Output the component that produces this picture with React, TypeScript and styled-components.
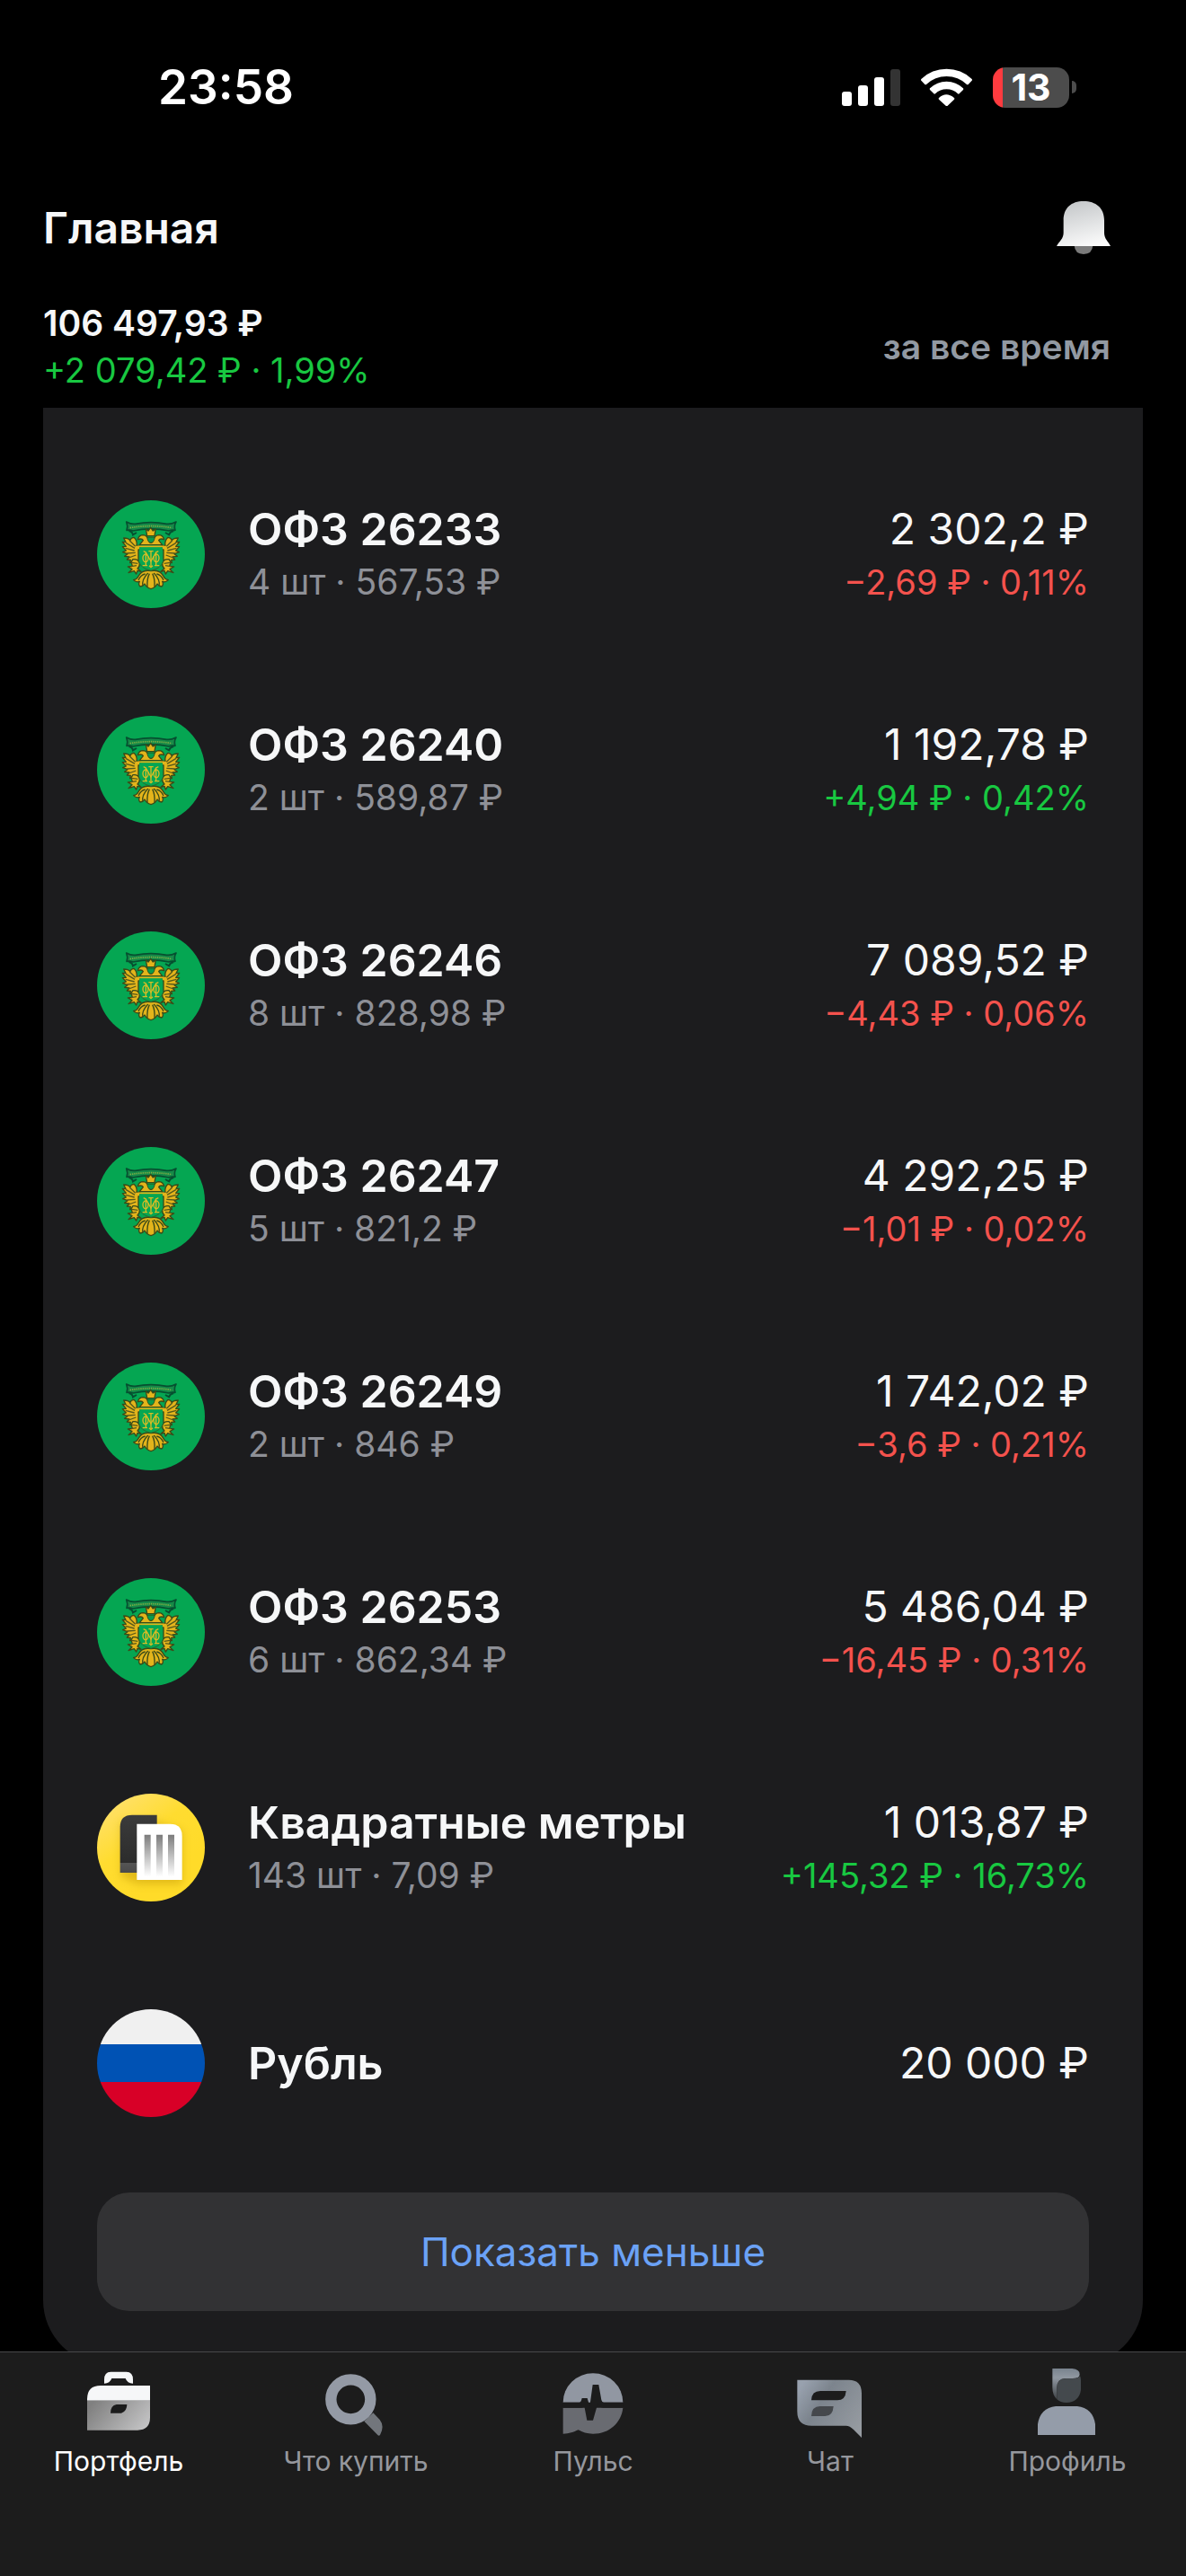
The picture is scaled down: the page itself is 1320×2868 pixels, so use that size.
import React, {useState} from 'react';
import styled, {createGlobalStyle} from "styled-components";

const GlobalStyle = createGlobalStyle`
  * {
    box-sizing: border-box;
  }
  body {
    margin: 0;
    background: #000;
    color: #f6f7f8;
    font-family: Inter, "Liberation Sans", sans-serif;
  }
`;

const Page = styled.div`
  min-height: 100vh;
  padding-bottom: 235px;
`;

const StatusBar = styled.div`
  display: flex;
  align-items: center;
  justify-content: space-between;
  height: 194px;
  padding: 0 122px 0 176px;
`;

const Clock = styled.time`
  font-size: 53px;
  font-weight: 600;
  color: #fff;
`;

const StatusIcons = styled.div`
  display: flex;
  align-items: center;
  gap: 23px;
`;

const Battery = styled.div`
  display: flex;
  align-items: center;
  gap: 3px;
`;

const BatteryBody = styled.span`
  width: 85px;
  height: 45px;
  border-radius: 14px;
  background: linear-gradient(to right, #ff3b3f 11px, #4c4c4c 11px);
  color: #fff;
  font-size: 41px;
  font-weight: 700;
  line-height: 45px;
  text-align: center;
`;

const BatteryCap = styled.span`
  width: 5px;
  height: 14px;
  border-radius: 0 7px 7px 0;
  background: #4c4c4c;
`;

const TitleBar = styled.header`
  display: flex;
  align-items: center;
  justify-content: space-between;
  height: 118px;
  padding: 0 84px 0 48px;
`;

const Title = styled.h1`
  margin: 0;
  font-size: 48px;
  font-weight: 600;
`;

const PlainButton = styled.button`
  display: flex;
  padding: 0;
  border: 0;
  background: none;
  cursor: pointer;
`;

const Summary = styled.section`
  display: flex;
  align-items: center;
  justify-content: space-between;
  padding: 22px 84px 16px 48px;
  font-size: 39px;
  line-height: 52px;
`;

const Total = styled.div`
  font-weight: 600;
`;

const Delta = styled.div<{$up: boolean}>`
  color: ${p => p.$up ? "#18c841" : "#f4524d"};
  font-size: 38px;
`;

const PeriodButton = styled(PlainButton)`
  color: #9299a2;
  font: inherit;
  font-weight: 600;
`;

const Card = styled.main`
  margin: 0 48px;
  padding: 43px 60px 60px;
  border-radius: 0 0 72px 72px;
  background: #1c1c1e;
`;

const List = styled.ul`
  margin: 0 0 24px;
  padding: 0;
  list-style: none;
`;

const Row = styled.li`
  display: flex;
  align-items: center;
  gap: 48px;
  height: 240px;
`;

const Info = styled.div`
  flex: 1;
`;

const Values = styled.div`
  text-align: right;
`;

const Name = styled.div`
  font-size: 50px;
  font-weight: 600;
  line-height: 62px;
`;

const Amount = styled.div`
  font-size: 48px;
  line-height: 62px;
`;

const Details = styled.div`
  color: #8e9097;
  font-size: 39px;
  line-height: 56px;
`;

const RowDelta = styled(Delta)`
  line-height: 56px;
`;

const ToggleButton = styled.button`
  display: block;
  width: 100%;
  height: 132px;
  border: 0;
  border-radius: 36px;
  background: #323234;
  color: #6ba2f6;
  font-family: inherit;
  font-size: 44px;
  cursor: pointer;
`;

const TabBar = styled.nav`
  position: fixed;
  left: 0;
  right: 0;
  bottom: 0;
  display: grid;
  grid-template-columns: repeat(5, 1fr);
  height: 250px;
  border-top: 1px solid #48484a;
  background: #1c1c1c;
`;

const Tab = styled.a<{$active?: boolean}>`
  display: flex;
  flex-direction: column;
  align-items: center;
  gap: 6px;
  padding-top: 17px;
  color: ${p => p.$active ? "#fff" : "#95979d"};
  font-size: 30px;
  line-height: 36px;
  text-decoration: none;
`;

const SignalIcon = () => (
    <svg width="65" height="41" viewBox="0 0 65 41" fill="#fff">
        <rect x="0" y="25" width="11" height="16" rx="3"/>
        <rect x="18" y="18" width="11" height="23" rx="3"/>
        <rect x="36" y="9" width="11" height="32" rx="3"/>
        <rect x="54" y="0" width="11" height="41" rx="3" fill="#333"/>
    </svg>
);

const WifiIcon = () => (
    <svg width="57" height="42" viewBox="375 105 171 126" fill="#fff">
        <path d="M376 141a122 122 0 0 1 169 0q2 3 0 5l-12 13q-3 2-5 0a98 98 0 0 0-135 0q-3 2-5 0l-12-13q-2-2 0-5z"/>
        <path d="M405 172a80 80 0 0 1 111 0q2 2 0 5l-13 13q-3 2-5 0a54 54 0 0 0-75 0q-3 2-5 0l-13-13q-2-3 0-5z"/>
        <path d="M435 204q24-22 51 0q2 2 0 5l-22 21q-3 3-6 0l-23-21q-2-3 0-5z"/>
    </svg>
);

const BellIcon = () => (
    <svg width="60" height="59" viewBox="828 552 180 177">
        <defs>
            <linearGradient id="bell" x1="0.3" y1="0" x2="0.6" y2="1">
                <stop offset="0" stopColor="#c4c7c9"/>
                <stop offset="1" stopColor="#fafafa"/>
            </linearGradient>
        </defs>
        <path fill="#7b7b7b" d="M887 700h62q-2 29-31 29t-31-29z"/>
        <path fill="url(#bell)"
              d="M851 616c0-42 26-64 67-64s69 22 69 64v42c0 20 13 28 21 44H828c9-16 23-24 23-44z"/>
    </svg>
);

const CrestIcon = () => (
    <svg width="120" height="120" viewBox="54 51 360 360">
        <circle cx="234" cy="231" r="180" fill="#05a652"/>
        {/* ribbon */}
        <path d="M152 123q16 9 30 7 52-10 104 0 15 2 32-7-8 13-3 28-11-2-21 2-60-13-120 0-10-4-21-2 5-14-1-28z"
              fill="#168a48" stroke="#064f30" strokeWidth="5" strokeLinejoin="round"/>
        <path d="M164 143q70-12 140 0" fill="none" stroke="#7fae45" strokeWidth="5" strokeDasharray="4 3"/>
        <path d="M160 153q12 2 14 13l12-7M310 153q-12 2-16 13l-12-7" fill="none" stroke="#064f30" strokeWidth="6"/>
        <g stroke="#3a4a18" strokeWidth="4" strokeLinejoin="round" fill="#e3b41b">
            {/* wings */}
            <path d="M143 177q16 0 21 8 4-10 13-10 12 10 9 27h12v14h-6v34q-16 2-28 10l2-10-12-1 8-9-16-2 10-8-16-6 11-5-12-13 12-1-12-15 11 1z"/>
            <path d="M325 177q-16 0-21 8-4-10-13-10-12 10-9 27h-12v14h6v34q16 2 28 10l-2-10 12-1-8-9 16-2-10-8 16-6-11-5 12-13-12-1 12-15-11 1z"/>
            {/* heads and crown */}
            <path d="M190 182q4-15 18-15 13 1 16 14 4 12 10 12t10-12q3-13 16-14 14 0 18 15-14-5-18 3l12 15h-76l12-15q-4-8-18-3z"/>
            <path d="M217 146l8 7 8-11 8 11 9-7-4 24h-25z"/>
            {/* legs */}
            <path d="M174 248q18-2 22 14 1 10-7 17l12 10-12-3-4 11-7-10-19 6 12-12-14-8 15-2-4-14z"/>
            <path d="M294 248q-18-2-22 14-1 10 7 17l-12 10 12-3 4 11 7-10 19 6-12-12 14-8-15-2 4-14z"/>
            {/* tail */}
            <path d="M234 287q-30-6-42 18-4 9-16 12 9 10 20 5-5 12 2 17 10-1 15-9 6 13 21 17 15-4 21-17 5 8 15 9 7-5 2-17 11 5 20-5-12-3-16-12-12-24-42-18z"/>
        </g>
        <path d="M207 337q-5-20 17-43M222 340q-2-26 7-44M246 340q2-26-7-44M261 337q5-20-17-43M192 318q8-18 23-21M276 318q-8-18-23-21"
              fill="none" stroke="#3a4a18" strokeWidth="4"/>
        <path d="M150 193l30 18M149 211l30 8M154 228l28-2M160 243l24-9M163 186l19 19M318 193l-30 18M319 211l-30 8M314 228l-28-2M308 243l-24-9M305 186l-19 19M170 259l20 3M168 272l18-3M298 259l-20 3M300 272l-18-3"
              fill="none" stroke="#57591b" strokeWidth="4"/>
        <path d="M222 175h24q0 16-12 18-12-2-12-18z" fill="#079b4d" stroke="#3a4a18" strokeWidth="2"/>
        {/* shield with the monogram */}
        <path d="M195 208h78v50q-5 20-39 27-34-7-39-27z" fill="#05a652"/>
        <path d="M188 205h92" fill="none" stroke="#e3b41b" strokeWidth="5"/>
        <path d="M194 256q6 22 40 30 34-8 40-30" fill="none" stroke="#2a6b2b" strokeWidth="3"/>
        <g fill="none" stroke="#d8bd25" strokeWidth="4">
            <path d="M209 221l8 4v42M259 221l-8 4v42M217 225l17 30 17-30M206 269h16M246 269h16"/>
            <path d="M234 221v50M226 221h16M228 269l6 6 6-6"/>
            <ellipse cx="216" cy="244" rx="9" ry="13"/>
            <ellipse cx="252" cy="244" rx="9" ry="13"/>
        </g>
    </svg>
);

const MetersIcon = () => (
    <svg width="120" height="120" viewBox="54 51 360 360">
        <defs>
            <linearGradient id="coin" x1="0.1" y1="0.1" x2="0.6" y2="0.8">
                <stop offset="0" stopColor="#ffe06a"/>
                <stop offset="0.5" stopColor="#ffdc30"/>
                <stop offset="1" stopColor="#ffdb29"/>
            </linearGradient>
            <linearGradient id="tower" x1="0" y1="0" x2="0" y2="1">
                <stop offset="0" stopColor="#3b3b3b"/>
                <stop offset="0.83" stopColor="#2c2c2c"/>
                <stop offset="0.83" stopColor="#555"/>
                <stop offset="1" stopColor="#4b4b4b"/>
            </linearGradient>
            <linearGradient id="window" x1="0" y1="0" x2="0" y2="1">
                <stop offset="0" stopColor="#7c7c7c"/>
                <stop offset="1" stopColor="#fff"/>
            </linearGradient>
            <filter id="glow" x="-40%" y="-40%" width="180%" height="180%">
                <feGaussianBlur stdDeviation="14"/>
            </filter>
        </defs>
        <circle cx="234" cy="231" r="180" fill="url(#coin)"/>
        <path d="M134 145h120l84 30v178H190l-56-26z" fill="#b58a00" opacity="0.4" filter="url(#glow)"/>
        <path d="M131 162q0-40 40-40h83v193H131z" fill="url(#tower)"/>
        <path d="M187 152h111q40 0 40 40v147H187z" fill="#fff"/>
        <path d="M212 188h21v140h-21zM252 188h21v140h-21zM291 188h21v140h-21z" fill="url(#window)"/>
    </svg>
);

const FlagIcon = styled.div`
  width: 120px;
  height: 120px;
  border-radius: 50%;
  background: linear-gradient(#f0f0f0 39px, #0052b4 39px, #0052b4 81px, #d80027 81px);
`;

const PortfolioIcon = () => (
    <svg width="80" height="80" viewBox="276 288 240 240">
        <defs>
            <linearGradient id="case" x1="0" y1="0.3" x2="1" y2="0.7">
                <stop offset="0" stopColor="#808080"/>
                <stop offset="1" stopColor="#c2c2c3"/>
            </linearGradient>
        </defs>
        <path fill="#f6f7f8" d="M348 341v-13q0-26 22-26h52q22 0 22 26v13q-19 0-25-17h-46q-6 17-25 17z"/>
        <path fill="#f6f7f8" d="M291 398v-5q0-45 45-45h165v50z"/>
        <path fill="url(#case)" fillRule="evenodd"
              d="M291 398h210v56q0 43-42 43H291zM369 440h36q19-6 19-29h-35q-20 4-20 29z"/>
    </svg>
);

const SearchIcon = () => (
    <svg width="80" height="80" viewBox="1068 288 240 240">
        <path fill="#72767c" d="M1216 467l30-28 22 23q17 22 1 51-4 5-8 0z"/>
        <circle cx="1171" cy="394" r="66" fill="none" stroke="#949aa5" strokeWidth="37"/>
    </svg>
);

const PulseIcon = () => (
    <svg width="80" height="80" viewBox="360 288 240 240">
        <path fill="#9197a2" d="M380 404a100 97 0 0 1 200 0z"/>
        <path fill="#696b71" d="M380 422h200c-5 50-46 87-100 87-20 0-35-5-49-13-16 7-30 13-51 13z"/>
        <path fill="#1c1c1c"
              d="M380 404h55q5 0 8-14h18l8 28 10-73h20l9 51q2 8 8 8h64v18h-66q-13 0-18-14l-16 56h-20l-9-47q-3 5-11 5h-60z"/>
    </svg>
);

const ChatIcon = () => (
    <svg width="80" height="80" viewBox="-48 288 240 240">
        <defs>
            <linearGradient id="bubble" x1="0" y1="0.2" x2="1" y2="0.8">
                <stop offset="0" stopColor="#98a1ae"/>
                <stop offset="0.35" stopColor="#7c848d"/>
                <stop offset="1" stopColor="#969ba1"/>
            </linearGradient>
        </defs>
        <path fill="url(#bubble)" d="M-38 329H134q43 0 43 45v148l-27-27q-13-13-25-13H10q-48 0-48-48z"/>
        <path fill="#1c1c1c" d="M9 397q1-31 30-31h86q-2 31-29 31z"/>
        <path fill="#45484c" d="M9 450q1-33 29-33h45q-2 33-28 33z"/>
    </svg>
);

const ProfileIcon = () => (
    <svg width="80" height="80" viewBox="744 288 240 240">
        <defs>
            <linearGradient id="hair" x1="0.5" y1="0" x2="0.5" y2="1">
                <stop offset="0" stopColor="#79838e"/>
                <stop offset="0.3" stopColor="#9098a1"/>
                <stop offset="1" stopColor="#3f4347"/>
            </linearGradient>
        </defs>
        <path fill="url(#hair)" d="M814 291h66q26 3 25 20-1 13-23 13h-24q-29 1-29 31v39q-15-14-15-40z"/>
        <path fill="#44494d" d="M829 355q0-30 29-31h24q20 0 24-8 3 5 3 14v32c-3 27-22 43-48 43-14 0-25-4-32-11z"/>
        <path fill="#949ca9" d="M765 513v-36q8-54 60-60h72q52 6 60 60v36z"/>
    </svg>
);

type Asset = {
    name: string;
    amount: string;
    icon: React.ReactNode;
    details?: string;
    delta?: string;
    up?: boolean;
};

const assets: Asset[] = [
    {name: "ОФЗ 26233", details: "4 шт · 567,53 ₽", amount: "2 302,2 ₽", delta: "−2,69 ₽ · 0,11%", icon: <CrestIcon/>},
    {name: "ОФЗ 26240", details: "2 шт · 589,87 ₽", amount: "1 192,78 ₽", delta: "+4,94 ₽ · 0,42%", up: true, icon: <CrestIcon/>},
    {name: "ОФЗ 26246", details: "8 шт · 828,98 ₽", amount: "7 089,52 ₽", delta: "−4,43 ₽ · 0,06%", icon: <CrestIcon/>},
    {name: "ОФЗ 26247", details: "5 шт · 821,2 ₽", amount: "4 292,25 ₽", delta: "−1,01 ₽ · 0,02%", icon: <CrestIcon/>},
    {name: "ОФЗ 26249", details: "2 шт · 846 ₽", amount: "1 742,02 ₽", delta: "−3,6 ₽ · 0,21%", icon: <CrestIcon/>},
    {name: "ОФЗ 26253", details: "6 шт · 862,34 ₽", amount: "5 486,04 ₽", delta: "−16,45 ₽ · 0,31%", icon: <CrestIcon/>},
    {name: "Квадратные метры", details: "143 шт · 7,09 ₽", amount: "1 013,87 ₽", delta: "+145,32 ₽ · 16,73%", up: true, icon: <MetersIcon/>},
    {name: "Рубль", amount: "20 000 ₽", icon: <FlagIcon/>},
];

const tabs = [
    {id: "portfolio", label: "Портфель", icon: <PortfolioIcon/>},
    {id: "buy", label: "Что купить", icon: <SearchIcon/>},
    {id: "pulse", label: "Пульс", icon: <PulseIcon/>},
    {id: "chat", label: "Чат", icon: <ChatIcon/>},
    {id: "profile", label: "Профиль", icon: <ProfileIcon/>},
];

function App() {
    const [expanded, setExpanded] = useState(true);
    const [tab, setTab] = useState("portfolio");
    const visible = expanded ? assets : assets.slice(0, 4);

    return (
        <Page>
            <GlobalStyle/>
            <StatusBar>
                <Clock>23:58</Clock>
                <StatusIcons>
                    <SignalIcon/>
                    <WifiIcon/>
                    <Battery>
                        <BatteryBody>13</BatteryBody>
                        <BatteryCap/>
                    </Battery>
                </StatusIcons>
            </StatusBar>
            <TitleBar>
                <Title>Главная</Title>
                <PlainButton aria-label="Уведомления"><BellIcon/></PlainButton>
            </TitleBar>
            <Summary>
                <div>
                    <Total>106 497,93 ₽</Total>
                    <Delta $up>+2 079,42 ₽ · 1,99%</Delta>
                </div>
                <PeriodButton>за все время</PeriodButton>
            </Summary>
            <Card>
                <List>
                    {visible.map(asset => (
                        <Row key={asset.name}>
                            {asset.icon}
                            <Info>
                                <Name>{asset.name}</Name>
                                {asset.details && <Details>{asset.details}</Details>}
                            </Info>
                            <Values>
                                <Amount>{asset.amount}</Amount>
                                {asset.delta && <RowDelta $up={!!asset.up}>{asset.delta}</RowDelta>}
                            </Values>
                        </Row>
                    ))}
                </List>
                <ToggleButton onClick={() => setExpanded(!expanded)}>
                    {expanded ? "Показать меньше" : "Показать больше"}
                </ToggleButton>
            </Card>
            <TabBar>
                {tabs.map(({id, label, icon}) => (
                    <Tab key={id} href={"#" + id} $active={id === tab} onClick={() => setTab(id)}>
                        {icon}
                        {label}
                    </Tab>
                ))}
            </TabBar>
        </Page>
    );
}

export default App;
